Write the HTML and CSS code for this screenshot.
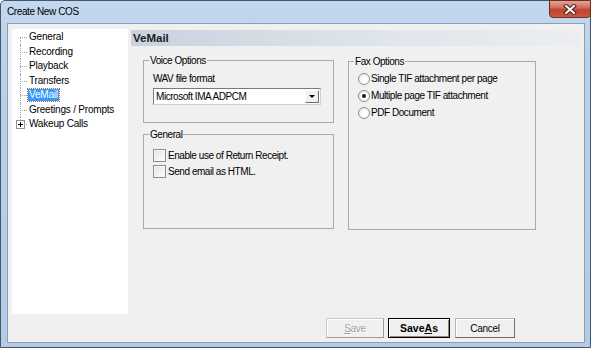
FILE: index.html
```html
<!DOCTYPE html>
<html lang="en">
<head>
  <meta charset="UTF-8" />
  <title>Create New COS</title>
  <link rel="stylesheet" href="styles.css">
</head>
<body>
  <div class="window">
    <div class="titlebar">
      <span class="title">Create New COS</span>
      <button class="close-btn" title="Close">
        <svg width="14" height="11" viewBox="0 0 14 11">
          <path d="M3 2 L11 9 M11 2 L3 9" stroke="#4b1d16" stroke-width="4" stroke-linecap="square" fill="none"/>
          <path d="M3 2 L11 9 M11 2 L3 9" stroke="#fff" stroke-width="2" stroke-linecap="square" fill="none"/>
        </svg>
      </button>
    </div>

    <div class="client">
      <ul class="tree">
        <li>General</li>
        <li>Recording</li>
        <li>Playback</li>
        <li>Transfers</li>
        <li class="selected"><span>VeMail</span></li>
        <li>Greetings / Prompts</li>
        <li class="collapsed">
          <span class="expander">
            <svg width="9" height="9" viewBox="0 0 9 9">
              <rect x="0.5" y="0.5" width="8" height="8" fill="#fff" stroke="#919191"/>
              <path d="M2 4.5 H7 M4.5 2 V7" stroke="#000" stroke-width="1"/>
            </svg>
          </span>
          Wakeup Calls
        </li>
      </ul>

      <div class="page">
        <div class="page-title">VeMail</div>

        <div class="groups">
          <div class="col">
            <fieldset class="group voice">
              <legend>Voice Options</legend>
              <div class="field-label">WAV file format</div>
              <div class="combo">
                <span class="combo-text">Microsoft IMA ADPCM</span>
                <span class="combo-arrow"></span>
              </div>
            </fieldset>

            <fieldset class="group general">
              <legend>General</legend>
              <div class="options">
                <label class="option"><span class="check"></span>Enable use of Return Receipt.</label>
                <label class="option"><span class="check"></span>Send email as HTML.</label>
              </div>
            </fieldset>
          </div>

          <fieldset class="group fax">
            <legend>Fax Options</legend>
            <div class="options radios">
              <label class="option"><span class="radio"></span>Single TIF attachment per page</label>
              <label class="option"><span class="radio on"></span>Multiple page TIF attachment</label>
              <label class="option"><span class="radio"></span>PDF Document</label>
            </div>
          </fieldset>
        </div>

        <div class="buttons">
          <button class="btn" disabled><u>S</u>ave</button>
          <button class="btn default">Save<u>A</u>s</button>
          <button class="btn cancel">Cancel</button>
        </div>
      </div>
    </div>
  </div>
</body>
</html>
```

FILE: styles.css
```css
body {
  margin: 0;
  font-family: "Liberation Sans", Arial, sans-serif;
  font-size: 10px;
  letter-spacing: -0.45px;
  color: #000;
}
.window {
  width: 591px;
  height: 348px;
  box-sizing: border-box;
  border: 1px solid #46566a;
  border-radius: 5px 5px 0 0;
  background: linear-gradient(#c4d8ef, #b9d1ea 60px, #b3cbe6);
  display: flex;
  flex-direction: column;
}
.titlebar {
  height: 22px;
  display: flex;
  justify-content: space-between;
  align-items: flex-start;
}
.title {
  padding: 5px 0 0 6px;
  font-size: 10px;
  letter-spacing: -0.4px;
  line-height: 12px;
}
.close-btn {
  width: 42px;
  height: 18px;
  margin: -1px -1px 0 0;
  padding: 0;
  border: 1px solid #6b2a22;
  border-radius: 0 0 4px 4px;
  background: linear-gradient(#e0a496, #d0705f 40%, #c1412f 55%, #c95a40);
  display: flex;
  align-items: center;
  justify-content: center;
}
.close-btn svg {
  display: block;
}
.client {
  flex: 1;
  margin: 0 5px 4px 6px;
  border: 1px solid #8d9db2;
  background: #f0f0f0;
  display: flex;
  gap: 3px;
  padding: 5px 3px 0 4px;
}

/* tree */
.tree {
  width: 116px;
  height: 284px;
  margin: 0;
  padding: 1px 0 0 0;
  list-style: none;
  background: #fff;
  font-size: 10px;
  letter-spacing: -0.2px;
}
.tree li {
  position: relative;
  height: 14.5px;
  line-height: 14.5px;
  padding-left: 17px;
  white-space: nowrap;
}
.tree li::before {
  content: "";
  position: absolute;
  left: 8px;
  top: 7px;
  width: 7px;
  border-top: 1px dotted #a0a0a0;
}
.tree li::after {
  content: "";
  position: absolute;
  left: 8px;
  top: 0;
  height: 100%;
  border-left: 1px dotted #a0a0a0;
}
.tree li:first-child::after {
  top: 7px;
  height: 8px;
}
.tree li:last-child::after {
  height: 7px;
}
.tree .selected span {
  background: #3399ff;
  color: #fff;
  padding: 0 1px 1px;
  margin-left: -1px;
  outline: 1px dotted #b8682a;
}
.expander {
  position: absolute;
  left: 4px;
  top: 3px;
  z-index: 1;
  line-height: 0;
}

/* property page */
.page {
  flex: 1;
  display: flex;
  flex-direction: column;
  padding-top: 1px;
}
.page-title {
  height: 16px;
  line-height: 16px;
  padding-left: 2px;
  font-size: 11.5px;
  letter-spacing: 0;
  font-weight: bold;
  color: #1e1e1e;
  background: linear-gradient(to right, #c8d2de, #dfe5ec 55%, #eceef1);
}
.groups {
  display: grid;
  grid-template-columns: 191px 188px;
  column-gap: 14px;
  align-items: start;
  padding-left: 12px;
  margin-top: 8px;
}
.col {
  display: flex;
  flex-direction: column;
  gap: 5px;
}
.group {
  box-sizing: border-box;
  margin: 0;
  min-width: 0;
  padding: 0 8px 0 9px;
  border: 1px solid #a9a9a9;
}
.group legend {
  padding: 0 1px;
  margin-left: -4px;
  line-height: 13px;
}
.voice {
  height: 69px;
}
.general {
  height: 101px;
}
.fax {
  height: 175px;
  margin-top: 1px;
}
.field-label {
  margin-top: 5px;
  line-height: 13px;
}
.combo {
  margin-top: 3px;
  width: 168px;
  height: 17px;
  box-sizing: border-box;
  display: flex;
  background: #fff;
  border: 1px solid;
  border-color: #7a7a7a #d0d0d0 #d0d0d0 #7a7a7a;
}
.combo-text {
  flex: 1;
  padding-left: 2px;
  line-height: 15px;
}
.combo-arrow {
  width: 14px;
  margin: 1px;
  box-sizing: border-box;
  background: #f0f0f0;
  border: 1px solid;
  border-color: #fff #6d6d6d #6d6d6d #fff;
  display: flex;
  align-items: center;
  justify-content: center;
}
.combo-arrow::after {
  content: "";
  border-left: 3px solid transparent;
  border-right: 3px solid transparent;
  border-top: 3px solid #000;
}
.options {
  margin-top: 6px;
}
.radios {
  margin-top: 2px;
}
.option {
  display: flex;
  align-items: center;
  height: 16px;
  gap: 2px;
}
.radios .option {
  height: 17px;
  gap: 1px;
}
.check {
  width: 13px;
  height: 13px;
  box-sizing: border-box;
  border: 1px solid #8f8f8f;
  background: linear-gradient(135deg, #e2e2e2, #fdfdfd);
  box-shadow: inset 0 0 0 1px #f6f6f6;
}
.radio {
  width: 12px;
  height: 12px;
  box-sizing: border-box;
  border: 1px solid #8f8f8f;
  border-radius: 50%;
  background: radial-gradient(circle at 60% 60%, #fff 30%, #e0e0e0);
  display: flex;
  align-items: center;
  justify-content: center;
}
.radio.on::after {
  content: "";
  width: 4px;
  height: 4px;
  border-radius: 50%;
  background: #1a1a1a;
}

/* bottom buttons */
.buttons {
  margin-top: auto;
  display: flex;
  justify-content: flex-end;
  gap: 4px;
  padding: 0 66px 4px 0;
}
.btn {
  height: 20px;
  padding: 0;
  font: inherit;
  letter-spacing: -0.3px;
  background: #f0f0f0;
  border: 1px solid;
  border-color: #b4b4b4 #6d6d6d #6d6d6d #b4b4b4;
  box-shadow: inset 1px 1px 0 #fff;
}
.btn[disabled] {
  width: 58px;
  color: #a0a0a0;
  text-shadow: 1px 1px 0 #fff;
  border-color: #c8c8c8 #9a9a9a #9a9a9a #c8c8c8;
}
.btn.default {
  width: 62px;
  font-size: 10.5px;
  letter-spacing: 0;
  font-weight: bold;
  border-color: #000;
  box-shadow: inset 1px 1px 0 #fff, inset -1px -1px 0 #8a8a8a;
}
.btn.cancel {
  width: 60px;
  margin-left: 1px;
}
```
